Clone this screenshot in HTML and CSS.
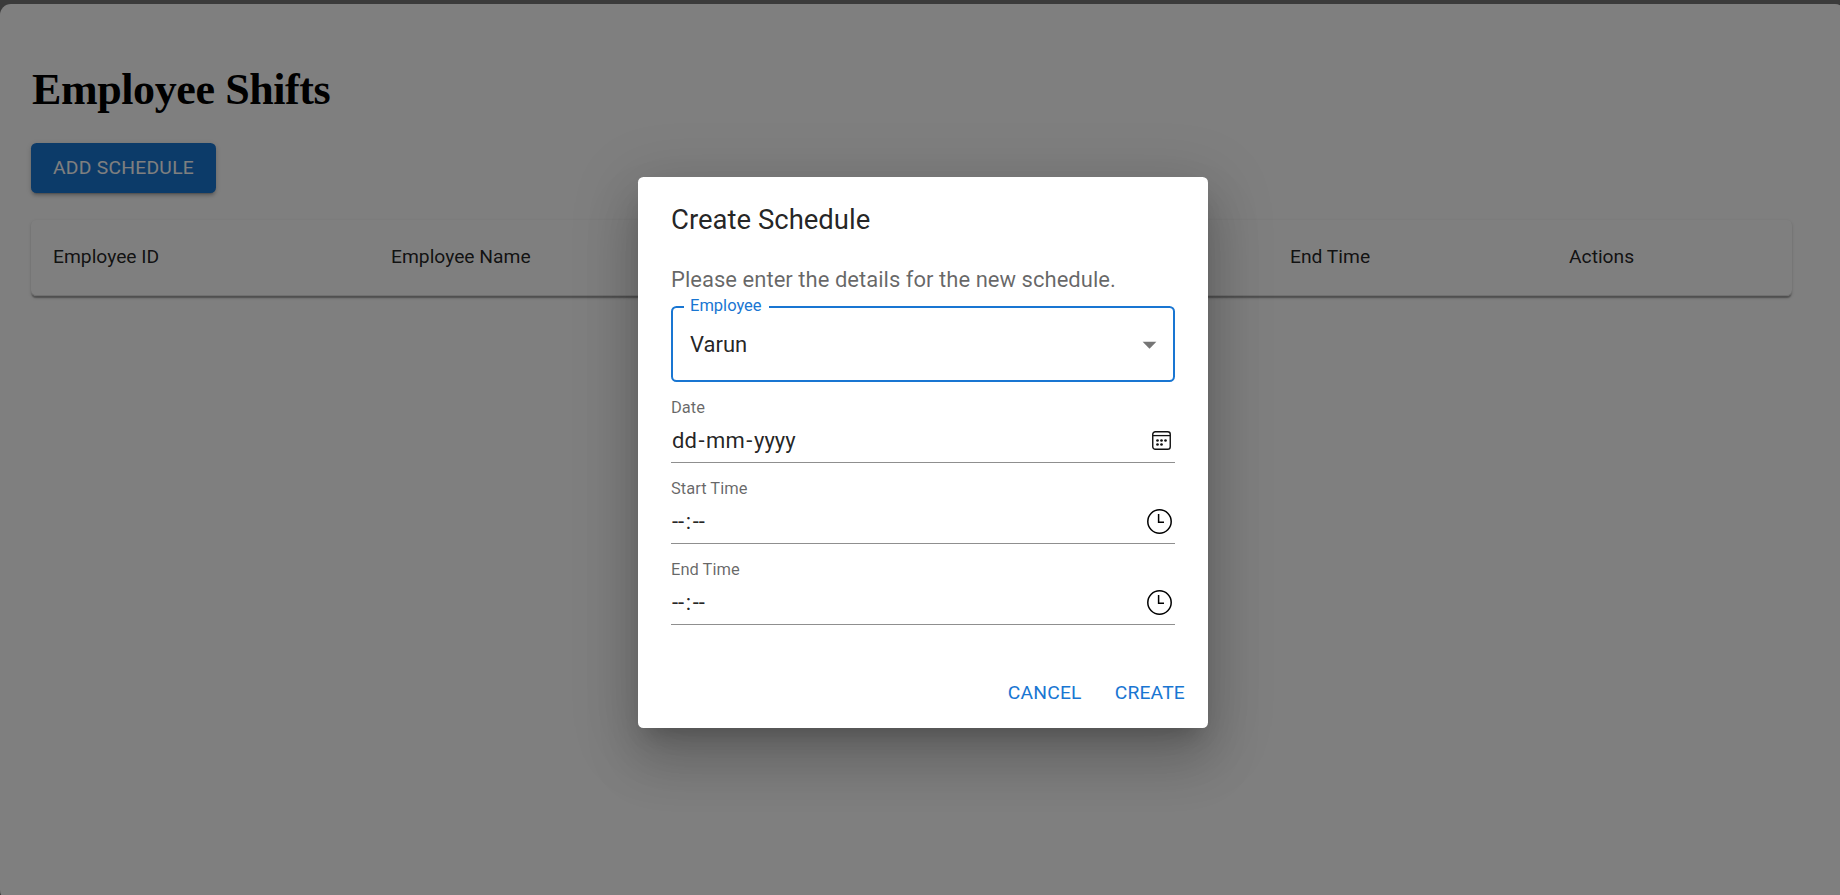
FILE: index.html
```html
<!DOCTYPE html>
<html lang="en">
<head>
<meta charset="utf-8">
<title>Employee Shifts</title>
<link rel="stylesheet" href="styles.css">
</head>
<body>
<main class="page">
  <h1 class="heading">Employee Shifts</h1>
  <button class="add-button" type="button">ADD SCHEDULE</button>
  <div class="table">
    <span class="cell">Employee ID</span>
    <span class="cell">Employee Name</span>
    <span class="cell">Date</span>
    <span class="cell">Start Time</span>
    <span class="cell">End Time</span>
    <span class="cell">Actions</span>
  </div>
</main>
<div class="backdrop">
  <section class="dialog" role="dialog" aria-labelledby="dialog-title">
    <h2 class="dialog-title" id="dialog-title">Create Schedule</h2>
    <p class="dialog-text">Please enter the details for the new schedule.</p>
    <div class="select">
      <span class="select-label">Employee</span>
      <span class="select-value">Varun</span>
      <svg class="arrow" viewBox="0 0 24 24"><path d="M7 10l5 5 5-5z" fill="#757575"/></svg>
    </div>
    <div class="field">
      <span class="field-label">Date</span>
      <div class="field-input"><span class="date"><i>dd</i><i>-</i><i>mm</i><i>-</i><i>yyyy</i></span>
        <svg class="calendar" viewBox="0 0 19 19" fill="none" stroke="#111"><rect x=".75" y=".75" width="17.5" height="17.5" rx="2.6" stroke-width="1.4"/><path d="M1 4.6h17" stroke-width="1.3"/><g fill="#111" stroke="none"><circle cx="5.5" cy="9.5" r="1.35"/><circle cx="9.5" cy="9.5" r="1.35"/><circle cx="13.5" cy="9.5" r="1.35"/><circle cx="5.5" cy="13.5" r="1.35"/><circle cx="9.5" cy="13.5" r="1.35"/></g></svg>
      </div>
    </div>
    <div class="field">
      <span class="field-label">Start Time</span>
      <div class="field-input"><span class="time"><i>--</i><i>:</i><i>--</i></span>
        <svg class="clock" viewBox="0 0 25 25" fill="none" stroke="#000" stroke-width="1.5"><circle cx="12.5" cy="12.5" r="11.7"/><path d="M11.6 5v8.3H17"/></svg>
      </div>
    </div>
    <div class="field">
      <span class="field-label">End Time</span>
      <div class="field-input"><span class="time"><i>--</i><i>:</i><i>--</i></span>
        <svg class="clock" viewBox="0 0 25 25" fill="none" stroke="#000" stroke-width="1.5"><circle cx="12.5" cy="12.5" r="11.7"/><path d="M11.6 5v8.3H17"/></svg>
      </div>
    </div>
    <div class="actions">
      <button class="text-button" type="button">CANCEL</button>
      <button class="text-button" type="button">CREATE</button>
    </div>
  </section>
</div>
</body>
</html>
```

FILE: styles.css
```css
* { box-sizing: border-box; }
html { height: 100%; background: #777; overflow: hidden; }
body {
  margin: 0;
  height: 100%;
  padding-top: 4px;
  overflow: hidden;
  font-family: Roboto, sans-serif;
}
.page {
  width: calc(100% + 6px);
  height: 897px;
  padding: 61px 54px 0 31px;
  background: #fff;
  border-radius: 11px;
}
.heading {
  margin: 0 0 28px;
  padding-left: 1px;
  font: bold 44px/50px "Liberation Serif", serif;
  letter-spacing: -.4px;
  color: #000;
}
.add-button {
  display: block;
  width: 185px;
  height: 50px;
  padding: 0;
  border: 0;
  border-radius: 5.5px;
  background: #1976d2;
  color: #fff;
  font: 400 19.25px/34px Roboto, sans-serif;
  letter-spacing: .28px;
  box-shadow: 0 4px 1.4px -3px rgba(0,0,0,.2), 0 3px 3px rgba(0,0,0,.14), 0 1.4px 7px rgba(0,0,0,.12);
}
.table {
  display: grid;
  grid-template-columns: 338px 410px 264px 225px 279px 1fr;
  align-items: center;
  margin-top: 27px;
  height: 76px;
  padding-bottom: 3px;
  border-radius: 5.5px;
  box-shadow: inset 0 -1px #e0e0e0, 0 3px 1.4px -1.4px rgba(0,0,0,.2), 0 1.4px 1.4px rgba(0,0,0,.14), 0 1.4px 4px rgba(0,0,0,.12);
}
.cell {
  padding-left: 22px;
  font-size: 19.25px;
  color: rgba(0,0,0,.87);
}
.backdrop {
  position: absolute;
  inset: 0;
  display: flex;
  justify-content: center;
  align-items: flex-start;
  padding: 177px 0 0 6px;
  background: rgba(0,0,0,.5);
}
.dialog {
  width: 570px;
  height: 551px;
  padding: 21px 33px 0;
  border-radius: 5.5px;
  background: #fff;
  color: rgba(0,0,0,.87);
  box-shadow: 0 15px 21px -10px rgba(0,0,0,.2), 0 33px 52px 4px rgba(0,0,0,.14), 0 12px 63px 11px rgba(0,0,0,.12);
}
.dialog-title {
  margin: 0 0 21px;
  font-size: 27.5px;
  line-height: 44px;
  font-weight: 400;
}
.dialog-text {
  margin: 0 0 10px;
  font-size: 22px;
  line-height: 33px;
  letter-spacing: .03px;
  color: rgba(0,0,0,.6);
}
.select {
  position: relative;
  display: flex;
  align-items: center;
  justify-content: space-between;
  height: 76px;
  padding: 1px 7.5px 0 17px;
  border: 2px solid #1976d2;
  border-radius: 5.5px;
  font-size: 22px;
}
.select-label {
  position: absolute;
  left: 11px;
  top: -12px;
  padding: 0 7px 0 6px;
  background: #fff;
  color: #1976d2;
  font-size: 16.5px;
  line-height: 20px;
}
.arrow { width: 33px; height: 33px; }
.field {
  height: 81px;
  padding-top: 16px;
  border-bottom: 1px solid #8f8f8f;
}
.field-label {
  display: block;
  font-size: 16.5px;
  line-height: 20px;
  color: rgba(0,0,0,.6);
}
.field-input {
  display: flex;
  align-items: center;
  justify-content: space-between;
  height: 43px;
  padding: 2px 3px 0 1px;
  font-size: 22px;
}
.calendar { width: 19px; height: 19px; margin-right: 1px; }
.clock { width: 25px; height: 25px; }
.date, .time { display: flex; }
.date { gap: 1.6px; }
.time { gap: 1.6px; }
.date i, .time i { font-style: normal; }
.actions {
  display: flex;
  justify-content: flex-end;
  gap: 11px;
  margin: 43px -21px 0 0;
}
.text-button {
  height: 50px;
  padding: 0 11px;
  border: 0;
  background: none;
  color: #1976d2;
  font: 400 19.25px/34px Roboto, sans-serif;
  letter-spacing: .2px;
}
```
